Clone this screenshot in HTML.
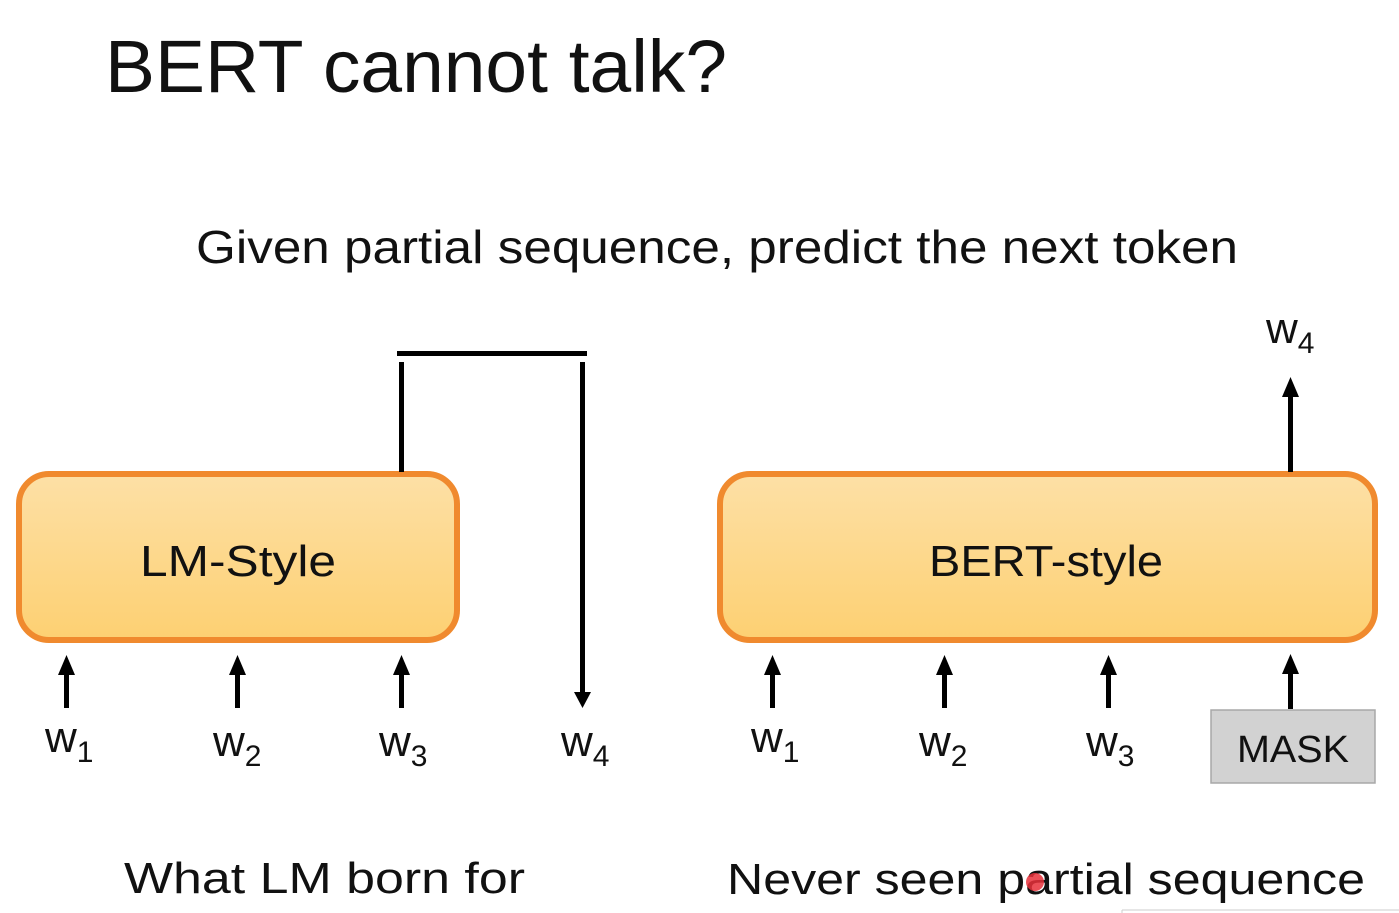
<!DOCTYPE html>
<html><head><meta charset="utf-8"><style>
html,body{margin:0;padding:0;background:#fff;}
svg{display:block;}
text{font-family:"Liberation Sans",sans-serif;fill:#111;}
</style></head><body>
<svg width="1399" height="913" viewBox="0 0 1399 913" xmlns="http://www.w3.org/2000/svg">
<defs>
<linearGradient id="g" x1="0" y1="0" x2="0" y2="1">
<stop offset="0" stop-color="#fde0a6"/><stop offset="1" stop-color="#fdd072"/>
</linearGradient>
</defs>
<rect width="1399" height="913" fill="#fff"/>
<text x="105" y="92" font-size="74" textLength="622" lengthAdjust="spacingAndGlyphs">BERT cannot talk?</text>
<text x="196" y="263" font-size="46" textLength="1042" lengthAdjust="spacingAndGlyphs">Given partial sequence, predict the next token</text>

<rect x="19" y="474" width="438" height="166" rx="30" fill="url(#g)" stroke="#f08a2e" stroke-width="6"/>
<text x="238" y="576" font-size="44" text-anchor="middle" textLength="196" lengthAdjust="spacingAndGlyphs">LM-Style</text>
<rect x="720" y="474" width="655" height="166" rx="30" fill="url(#g)" stroke="#f08a2e" stroke-width="6"/>
<text x="1046" y="576" font-size="44" text-anchor="middle" textLength="234" lengthAdjust="spacingAndGlyphs">BERT-style</text>

<g fill="#000">
<rect x="64" y="672" width="5" height="36"/><polygon points="66.5,655 58,675 75,675"/>
<rect x="235" y="672" width="5" height="36"/><polygon points="237.5,655 229,675 246,675"/>
<rect x="399" y="672" width="5" height="36"/><polygon points="401.5,655 393,675 410,675"/>
<rect x="397" y="351" width="190" height="5"/>
<rect x="399" y="362" width="5" height="110"/>
<rect x="580" y="362" width="5" height="330"/>
<polygon points="582.5,708 574,692 591,692"/>
<rect x="770" y="672" width="5" height="36"/><polygon points="772.5,655 764,675 781,675"/>
<rect x="942" y="672" width="5" height="36"/><polygon points="944.5,655 936,675 953,675"/>
<rect x="1106" y="672" width="5" height="36"/><polygon points="1108.5,655 1100,675 1117,675"/>
<rect x="1288" y="672" width="5" height="37"/><polygon points="1290.5,654 1282,674 1299,674"/>
<rect x="1288" y="395" width="5" height="77"/><polygon points="1290.5,377 1282,397 1299,397"/>
</g>

<g font-size="44">
<text x="45" y="752">w<tspan font-size="30" dy="10">1</tspan></text>
<text x="213" y="756">w<tspan font-size="30" dy="10">2</tspan></text>
<text x="379" y="756">w<tspan font-size="30" dy="10">3</tspan></text>
<text x="561" y="756">w<tspan font-size="30" dy="10">4</tspan></text>
<text x="751" y="752">w<tspan font-size="30" dy="10">1</tspan></text>
<text x="919" y="756">w<tspan font-size="30" dy="10">2</tspan></text>
<text x="1086" y="756">w<tspan font-size="30" dy="10">3</tspan></text>
<text x="1266" y="343">w<tspan font-size="30" dy="10">4</tspan></text>
</g>

<rect x="1211" y="710" width="164" height="73" fill="#d2d2d2" stroke="#a8a8a8" stroke-width="1.5"/>
<text x="1293" y="762" font-size="38" text-anchor="middle" textLength="112" lengthAdjust="spacingAndGlyphs">MASK</text>

<text x="124" y="893" font-size="44" textLength="401" lengthAdjust="spacingAndGlyphs">What LM born for</text>
<text x="727" y="894" font-size="44" textLength="638" lengthAdjust="spacingAndGlyphs">Never seen partial sequence</text>
<circle cx="1035" cy="882" r="9" fill="#e8303a" opacity="0.85"/>
<line x1="1122" y1="910" x2="1399" y2="910" stroke="#ccc" stroke-width="1"/>
<line x1="1122" y1="910" x2="1122" y2="913" stroke="#ccc" stroke-width="1"/>
</svg>
</body></html>
